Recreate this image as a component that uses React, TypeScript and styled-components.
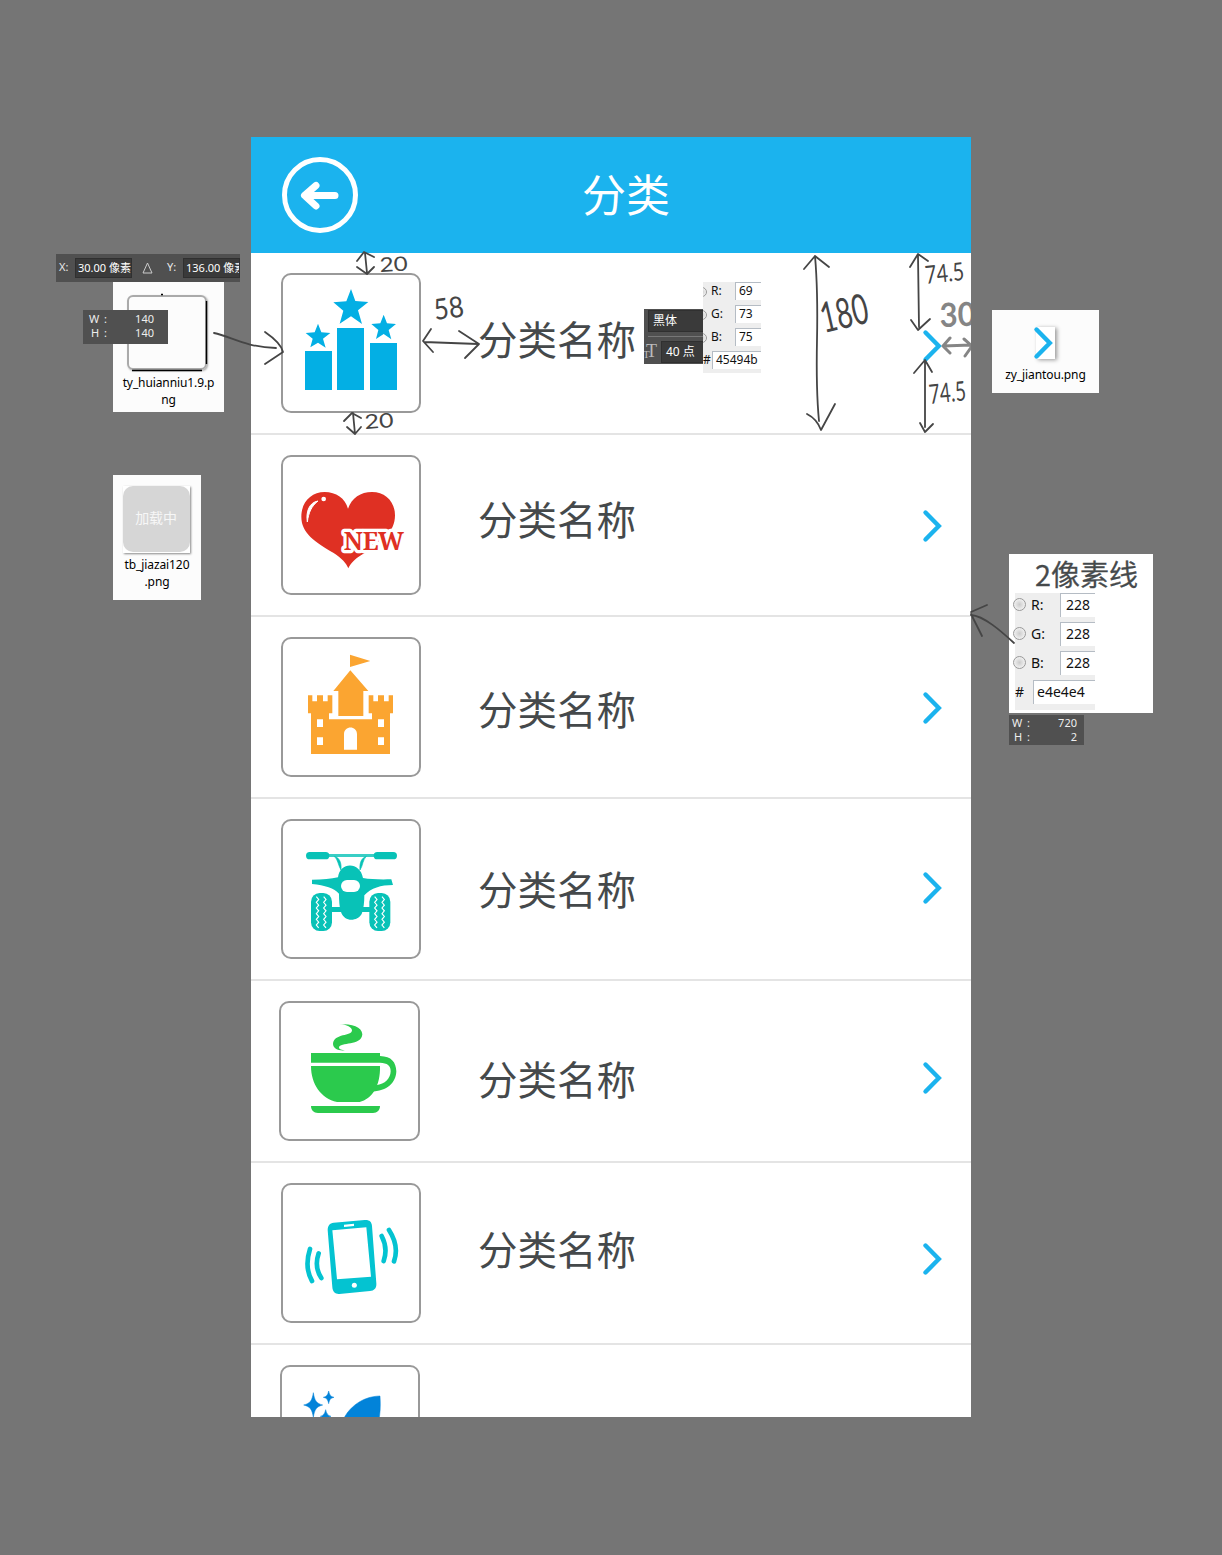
import React from 'react';
import styled, { createGlobalStyle } from 'styled-components';

const cjk = '"Noto Sans CJK SC", sans-serif';

const GlobalStyle = createGlobalStyle`
  * { box-sizing: border-box; }
  body { margin: 0; background: #757575; font-family: "Noto Sans", ${cjk}; }
`;

const Board = styled.main`
  position: relative;
  width: 1222px;
  height: 1555px;
  padding: 137px 251px 0;
  overflow: hidden;
  background: #757575;
`;

const Screen = styled.section`
  position: relative;
  display: flex;
  flex-direction: column;
  width: 720px;
  height: 1280px;
  overflow: hidden;
  background: #fff;
`;

const Header = styled.header`
  flex: none;
  display: flex;
  align-items: center;
  gap: 224px;
  height: 116px;
  padding-left: 31px;
  background: #1bb3ee;
`;

const Title = styled.h1`
  margin: 0;
  padding-bottom: 4px;
  color: #fff;
  font: 400 44px/60px ${cjk};
`;

const Row = styled.div`
  flex: none;
  display: flex;
  align-items: flex-start;
  height: 182px;
  border-bottom: 2px solid #e4e4e4;
`;

const Tile = styled.div<{ $left: number; $width: number }>`
  flex: none;
  display: flex;
  width: ${p => p.$width}px;
  height: 140px;
  margin: 20px 0 0 ${p => p.$left}px;
  border: 2px solid #999;
  border-radius: 10px;
  overflow: hidden;
  svg { flex: none; }
`;

const NameSlot = styled.div<{ $center: number; $left: number }>`
  flex: 1;
  padding: ${p => p.$center - 33}px 0 0 ${p => p.$left}px;
  color: #45494b;
  font: 400 39.5px/60px ${cjk};
`;

const ChevronSlot = styled.div<{ $center: number }>`
  display: flex;
  padding: ${p => p.$center - 17}px 28px 0 0;
`;

const Chevron = () => (
  <svg width="21" height="34" viewBox="0 0 21 34" fill="none" stroke="#1bb3ee" strokeWidth="4.400" strokeLinecap="round" strokeLinejoin="miter">
    <path d="M3.5 3.5 16.800 17 3.5 30.500" />
  </svg>
);

const BackIcon = () => (
  <svg width="76" height="76" viewBox="0 0 76 76" fill="none" stroke="#fff">
    <circle cx="38" cy="38" r="35.500" strokeWidth="5" />
    <path d="M53 38.500H23M34 28.500 22.500 38.500 34 49" strokeWidth="7" strokeLinecap="round" strokeLinejoin="round" />
  </svg>
);

/* Icons: three drawing units to one screen pixel. */
const Art = ({ box, children }: { box: string; children: React.ReactNode }) => (
  <svg width="136" height="136" viewBox={box}>{children}</svg>
);

const Ranking = () => (
  <Art box="24 90 408 408">
    <g fill="#03afe4">
      <path d="M90 318h81v117H90zM186 249h81v186h-81zM285 294h81v141h-81z" />
      <path d="m228 132 13 36 39 3-31 25 12 41-33-23-34 22 11-39-30-25 39-3z" />
      <path d="m129 236 10 26 27 2-22 17 8 27-23-15-23 14 7-26-21-17 27-2z" />
      <path d="m326 209 10 26 27 2-22 18 8 28-23-16-23 15 7-27-21-18 27-2z" />
    </g>
  </Art>
);

const Heart = () => (
  <Art box="24 21 408 408">
    <path d="M219 176C230 144 257 126 291 126c40 0 69 29 69 70 0 49-39 84-101 119-19 11-34 27-39 40-6-15-19-30-44-46-56-34-97-59-97-109 0-44 30-74 70-74 34 0 62 19 70 50z" fill="#df3023" />
    <path d="M97 216c-5-31 6-59 32-63-20 16-28 34-32 63z" fill="#fff" stroke="#fff" strokeWidth="3" />
    <circle cx="146" cy="147" r="7" fill="#fff" />
    <text x="206" y="301" textLength="181" lengthAdjust="spacingAndGlyphs" fontFamily="Noto Serif, DejaVu Serif, Liberation Serif, serif" fontSize="77" fontWeight="700" fill="#df3023" stroke="#fff" strokeWidth="20" strokeLinejoin="round" paintOrder="stroke">NEW</text>
  </Art>
);

const Castle = () => (
  <Art box="24 21 408 408">
    <g fill="#fba531">
      <path d="m225 68 61 19-61 18zM226 115l54 62h-15v75h-75v-75h-15z" />
      <path d="M99 190h13v18h14v-18h18v18h14v-18h14v54h-10v18h129v-18h-10v-54h14v18h14v-18h18v18h14v-18h13v54h-9v122H108V244h-9z" />
    </g>
    <path d="M207 353v-46c0-27 39-27 39 0v46zM126 262h18v23h-18zM309 262h18v23h-18zM126 316h18v23h-18zM309 316h18v23h-18z" fill="#fff" />
  </Art>
);

const tread = (x: number) => `M${x} 248` + Array.from({ length: 11 }, (_, i) => `l${i % 2 ? -7 : 7} 8.500`).join('');

const Quad = () => (
  <Art box="24 21 408 408">
    <g fill="#08c2b7">
      <rect x="93" y="114" width="70" height="22" rx="11" />
      <rect x="296" y="114" width="70" height="22" rx="11" />
      <path d="M155 120h150v9H155z" fillOpacity=".8" />
      <path d="M165 279h125v15H165z" />
      <path d="M178 127c15 4 22 18 20 41-8-13-9-31-20-41zM274 127c-14 5-21 18-19 41 9-13 8-31 19-41z" stroke="#08c2b7" strokeWidth="2" />
      <path d="M111 197c32 0 58-3 78-7 5-48 67-48 75 2 23 4 50 5 85 4l5 17c-37 0-65 9-86 31 0 21-2 41-8 56-13 22-51 26-62-6-5-16-6-34-6-55-14-17-42-25-81-29z" />
      <rect x="108" y="237" width="63" height="114" rx="26" />
      <rect x="283" y="237" width="63" height="114" rx="26" />
    </g>
    <rect x="198" y="198" width="57" height="36" rx="18" fill="#fff" />
    <path d={[124, 146, 299, 321].map(tread).join('')} fill="none" stroke="#fff" strokeWidth="3.500" />
  </Art>
);

const Cup = () => (
  <Art box="18 21 408 408">
    <g fill="#2bca4d">
      <path d="M193 84c38 0 68 8 69 31-2 36-68 22-70 40 0 4 8 7 19 8-22 2-36-5-37-19 3-33 57-22 57-41 0-9-15-17-38-19z" />
      <path d="M108 171h207v9c35 1 48 19 49 46-1 33-26 60-76 61 7-4 12-9 15-19 28-4 43-20 44-42 0-18-10-25-32-26H108z" />
      <path d="M108 210h207c2 61-25 99-61 108h-68c-48-11-78-53-78-108zM108 330h207c0 12-8 21-21 21H129c-13 0-21-9-21-21z" />
    </g>
  </Art>
);

const Phone = () => (
  <Art box="24 21 408 408">
    <path d="m176 134 93-8c14-1 21 5 22 18l13 172c1 14-6 22-19 23l-92 9c-12 1-20-7-21-20l-14-172c0-13 6-21 18-22z" fill="#04c3d1" />
    <path d="m172 157 102-9 14 148-102 8zM207 140l30-3v7l-30 3z" fill="#fff" />
    <circle cx="238" cy="322" r="7.500" fill="#fff" />
    <path d="M105 213c-12 37-11 66 6 96M131 226c-9 26-8 50 8 74M320 174c14 27 15 50 6 75M342 156c20 31 27 61 15 94" fill="none" stroke="#04c3d1" strokeWidth="14" strokeLinecap="round" />
  </Art>
);

const Rocket = () => (
  <Art box="21 567 408 408">
    <path d="M115 644c4 24 9 32 28 37-19 5-24 13-28 37-4-24-9-32-29-37 20-5 25-13 29-37zM161 639c3 12 5 16 16 19-11 3-13 6-16 19-3-13-5-16-16-19 11-3 13-7 16-19zM152 695c3 12 5 16 16 20-11 3-13 7-16 20-3-13-5-17-16-20 11-4 13-8 16-20zM200 735c20-50 65-80 115-81 2 30 1 54-5 81z" fill="#0283d9" stroke="#0283d9" strokeWidth="1.500" />
  </Art>
);

const Note = styled.div<{ $x: number; $y: number; $w: number; $h: number; $bg: string }>`
  position: absolute;
  left: ${p => p.$x}px;
  top: ${p => p.$y}px;
  width: ${p => p.$w}px;
  height: ${p => p.$h}px;
  background: ${p => p.$bg};
  overflow: hidden;
`;

const FileCard = styled(Note)`
  display: flex;
  flex-direction: column;
  align-items: center;
  color: #000;
  font-size: 12px;
  line-height: 17px;
  letter-spacing: -0.1px;
`;

const FrameThumb = styled.div`
  flex: none;
  width: 80px;
  height: 75px;
  margin: 13px 3px 4px 0;
  border: 2px solid #aaa;
  border-radius: 6px;
  box-shadow: 1px 1px 2px #aaa;
`;

const PatchGuides = styled.svg`
  position: absolute;
  left: 0;
  top: 0;
`;

const LoadingThumb = styled.div`
  flex: none;
  width: 67px;
  height: 67px;
  margin: 11px 2px 3px 0;
  background: #fff;
  box-shadow: 1px 1px 2px #888;
`;

const LoadingFace = styled.div`
  height: 66px;
  border-radius: 10px;
  background: #d6d6d6;
  color: #f7f7f7;
  font: 400 14px/62px ${cjk};
  text-align: center;
`;

const ArrowThumb = styled.div`
  flex: none;
  display: flex;
  width: 19px;
  height: 32px;
  margin: 17px 0 7px;
  background: #fff;
  box-shadow: 2px 1px 4px #999;
  svg { margin: -1px 0 0 -3px; flex: none; }
`;

const OptionBar = styled(Note)`
  display: flex;
  align-items: center;
  padding-left: 3px;
  color: #e8e8e8;
  font-size: 11px;
  line-height: 17px;
  svg { margin: 0 14px 0 10px; flex: none; }
`;

const BarLabel = styled.span`
  width: 16px;
  margin-top: -4px;
  flex: none;
`;

const BarField = styled.span`
  flex: none;
  width: 57px;
  height: 20px;
  padding-left: 2px;
  overflow: hidden;
  white-space: nowrap;
  border: 1px solid #303030;
  background: #3a3a3a;
  color: #fff;
`;

const SizeTip = styled(Note)`
  display: grid;
  grid-template-columns: 1fr auto;
  align-content: center;
  padding: 0 ${p => (p.$w > 80 ? 14 : 7)}px ${p => (p.$w > 80 ? 2 : 0)}px ${p => (p.$w > 80 ? 6 : 3)}px;
  color: #eee;
  font-size: 11px;
  line-height: 14px;
  text-align: right;
  span:nth-child(odd) { text-align: left; word-spacing: 2px; }
  span:nth-child(3) { padding-left: 2px; }
`;

const FontNote = styled(Note)`
  display: grid;
  grid-template-rows: 22px 25px;
  gap: 4px;
  padding: 1px 0 3px 4px;
  color: #fff;
  font: 400 12px/20px "Noto Sans", ${cjk};
`;

const FontField = styled.div`
  padding-left: 4px;
  border: 1px solid #303030;
  border-right: 0;
  background: #3a3a3a;
`;

const SizeField = styled.div`
  display: grid;
  grid-template-columns: 13px 1fr;
  padding-top: 4px;
  border-top: 1px solid #777;
`;

const TypeMark = styled.span`
  position: relative;
  margin-left: -2px;
  color: #bbb;
  font: 18px/20px "Liberation Serif", serif;
  &::before {
    content: 'T';
    position: absolute;
    left: -3px;
    top: 3px;
    font-size: 11px;
  }
`;

const ColorList = styled.div<{ $pitch: number; $size: number }>`
  display: grid;
  grid-auto-rows: ${p => p.$pitch}px;
  font-size: ${p => p.$size}px;
  line-height: ${p => p.$pitch - 6}px;
  color: #111;
`;

const ColorRow = styled.div<{ $cols: string }>`
  display: grid;
  grid-template-columns: ${p => p.$cols};
  align-items: start;
`;

const Value = styled.span<{ $inset?: number }>`
  height: calc(100% - 5px);
  padding-left: ${p => p.$inset ?? 4}px;
  box-shadow: inset 1px 1px 0 #b5bcc4;
  background: #fff;
`;

const Radio = styled.i`
  width: 13px;
  height: 13px;
  margin: 5px 0 0 -2px;
  border: 1px solid #999;
  border-radius: 50%;
  background: radial-gradient(#ccc, #fff);
`;

const SmallRadio = styled(Radio)`
  width: 10px;
  height: 10px;
  margin-left: -6px;
`;

const LineCaption = styled.div`
  padding-left: 26px;
  height: 38px;
  color: #45494b;
  font: 350 29px/39px "Noto Sans CJK SC", sans-serif;
  white-space: nowrap;
  -webkit-text-stroke: 0.4px #45494b;
`;

const LineSample = styled.div`
  width: 80px;
  height: 117px;
  margin: 1px 0 0 6px;
  background: #eee;
`;

const Ink = styled.svg`
  position: absolute;
  left: 0;
  top: 0;
  fill: none;
  stroke: #454545;
  stroke-width: 1.8;
  stroke-linecap: round;
  stroke-linejoin: round;
  text { fill: #454545; stroke: none; font-family: Lato, "Open Sans", sans-serif; font-weight: 400; }
`;

const FaintStroke = styled.path`
  stroke: #858585;
  stroke-width: 3;
`;

const Handwriting = styled.text<{ $faint: boolean }>`
  && {
    fill: ${p => (p.$faint ? '#858585' : '#454545')};
    font-weight: ${p => (p.$faint ? 700 : 400)};
  }
`;

interface Mark { t: string; x: number; y: number; w: number; s: number; r: number; faint?: boolean }

const marks: Mark[] = [
  { t: '20', x: 380, y: 272, w: 28, s: 20, r: -3 },
  { t: '20', x: 365, y: 429, w: 29, s: 20, r: -4 },
  { t: '58', x: 435, y: 320, w: 30, s: 29, r: -7 },
  { t: '180', x: 824, y: 333, w: 48, s: 42, r: -13 },
  { t: '74.5', x: 926, y: 284, w: 39, s: 25, r: -6 },
  { t: '74.5', x: 930, y: 404, w: 37, s: 27, r: -6 },
  { t: '30', x: 940, y: 327, w: 36, s: 33, r: -2, faint: true },
];

const Marks = ({ inside }: { inside: boolean }) => (
  <>
    {marks.filter(m => !!m.faint === inside).map(m => (
      <Handwriting key={m.t + m.y} $faint={!!m.faint} x={m.x} y={m.y} fontSize={m.s} textLength={m.w}
        lengthAdjust="spacingAndGlyphs" transform={`rotate(${m.r} ${m.x} ${m.y})`}>{m.t}</Handwriting>
    ))}
  </>
);

const rows = [
  { Icon: Ranking, left: 30, width: 140, name: 88, arrow: 92.5 },
  { Icon: Heart, left: 30, width: 140, name: 86, arrow: 90.5 },
  { Icon: Castle, left: 30, width: 140, name: 94, arrow: 90.5 },
  { Icon: Quad, left: 30, width: 140, name: 92, arrow: 88.5 },
  { Icon: Cup, left: 28, width: 141, name: 100, arrow: 96.5 },
  { Icon: Phone, left: 30, width: 140, name: 88, arrow: 95.5 },
];

const channels = ['R:', 'G:', 'B:'];

export default function App() {
  return (
    <Board>
      <GlobalStyle />
      <Screen>
        <Header><BackIcon /><Title>分类</Title></Header>
        {rows.map(({ Icon, left, width, name, arrow }, i) => (
          <Row key={i}>
            <Tile $left={left} $width={width}><Icon /></Tile>
            <NameSlot $center={name} $left={227 - left - width}>分类名称</NameSlot>
            <ChevronSlot $center={arrow}><Chevron /></ChevronSlot>
          </Row>
        ))}
        <Row><Tile $left={29} $width={140}><Rocket /></Tile></Row>
        <Ink width="720" height="1280" viewBox="251 137 720 1280">
          <Marks inside />
          <FaintStroke d="M943 346 971 345M950 338 943 346 950 353M964 339 972 346 965 356" />
        </Ink>
      </Screen>

      <FileCard $x={113} $y={282} $w={111} $h={130} $bg="#fcfcfc">
        <FrameThumb />
        <PatchGuides width="111" height="100" viewBox="0 0 111 100">
          <path d="M48 12.500h2M19 88.500h70M93.500 19v63" stroke="#000" strokeWidth="1.400" />
        </PatchGuides>
        <span>ty_huianniu1.9.p</span>
        <span>ng</span>
      </FileCard>
      <OptionBar $x={56} $y={254} $w={184} $h={28} $bg="#505050">
        <BarLabel>X:</BarLabel>
        <BarField>30.00 像素</BarField>
        <svg width="11" height="12" viewBox="0 0 11 12" fill="none" stroke="#ccc"><path d="M1 11 5.500 1 10 11z" /></svg>
        <BarLabel>Y:</BarLabel>
        <BarField>136.00 像素</BarField>
      </OptionBar>
      <SizeTip $x={83} $y={310} $w={85} $h={34} $bg="#505050">
        <span>W :</span><span>140</span><span>H :</span><span>140</span>
      </SizeTip>

      <FileCard $x={113} $y={475} $w={88} $h={125} $bg="#fcfcfc">
        <LoadingThumb><LoadingFace>加载中</LoadingFace></LoadingThumb>
        <span>tb_jiazai120</span>
        <span>.png</span>
      </FileCard>

      <FileCard $x={992} $y={310} $w={107} $h={83} $bg="#fcfcfc">
        <ArrowThumb><Chevron /></ArrowThumb>
        <span>zy_jiantou.png</span>
      </FileCard>

      <FontNote $x={644} $y={309} $w={59} $h={55} $bg="#505050">
        <FontField>黑体</FontField>
        <SizeField><TypeMark>T</TypeMark><FontField>40 点</FontField></SizeField>
      </FontNote>
      <Note $x={703} $y={282} $w={58} $h={91} $bg="#eee">
        <ColorList $pitch={23} $size={12}>
          {[69, 73, 75].map((v, i) => (
            <ColorRow key={v} $cols="8px 24px 1fr"><SmallRadio /><span>{channels[i]}</span><Value>{v}</Value></ColorRow>
          ))}
          <ColorRow $cols="9px 1fr"><span>#</span><Value>45494b</Value></ColorRow>
        </ColorList>
      </Note>

      <Note $x={1009} $y={554} $w={144} $h={159} $bg="#fff">
        <LineCaption>2像素线</LineCaption>
        <LineSample>
          <ColorList $pitch={29} $size={14}>
            {channels.map(c => (
              <ColorRow key={c} $cols="16px 29px 1fr"><Radio /><span>{c}</span><Value $inset={6}>228</Value></ColorRow>
            ))}
            <ColorRow $cols="18px 1fr"><span>#</span><Value>e4e4e4</Value></ColorRow>
          </ColorList>
        </LineSample>
      </Note>
      <SizeTip $x={1009} $y={715} $w={75} $h={30} $bg="#505050">
        <span>W :</span><span>720</span><span>H :</span><span>2</span>
      </SizeTip>

      <Ink width="1222" height="1555" viewBox="0 0 1222 1555">
        <Marks inside={false} />
        <path d="M214 333C232 337 245 347 276 348M265 332Q281 343 283 352L265 364" />
        <path d="M365 253 367 273M357 261 364 252 374 257M357 267 367 274 374 267" />
        <path d="M353 413 355 434M344 421 352 413 361 418M347 427 355 434 361 427" />
        <path d="M424 342 478 344M431 329 423 341 433 352M459 331 479 344 465 358" />
        <path d="M815 256Q818 290 817 340T819 421M804 269 815 256 829 267M807 414Q817 419 821 430L835 404" />
        <path d="M918 256 919 327M910 267 918 254 928 261M911 320 918 330 930 319" />
        <path d="M925 361V427M914 373 925 360 932 372M920 423 925 432 933 424" />
        <path d="M1014 643C1001 631 984 616 971 615M987 605 971 612M971 614 982 636" />
      </Ink>
    </Board>
  );
}
